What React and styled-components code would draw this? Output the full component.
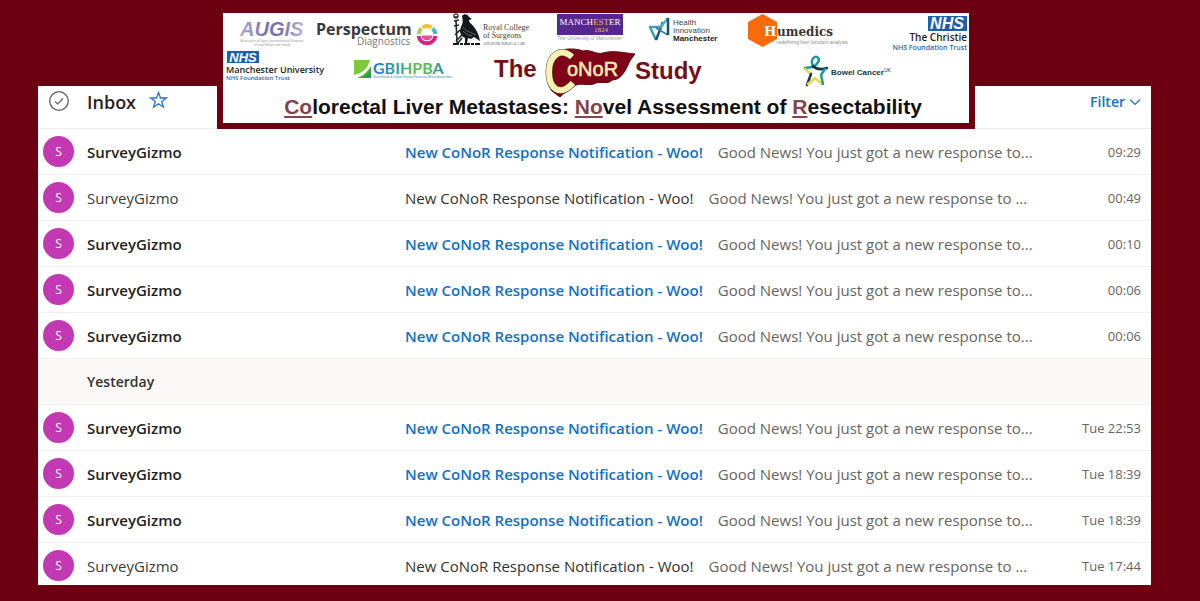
import React from 'react';
import styled, { createGlobalStyle } from 'styled-components';

const GlobalStyle = createGlobalStyle`
  * {
    box-sizing: border-box;
  }

  body {
    margin: 0;
    background: #6c0010;
    font-family: "Open Sans", "Noto Sans", sans-serif;
  }

  h1, h2, ul {
    margin: 0;
    padding: 0;
  }
`;

const Page = styled.main`
  position: relative;
  display: flex;
  height: 100vh;
  padding: 86px 49px 16px 38px;
`;

const Mailbox = styled.section`
  flex: 1;
  min-width: 0;
  overflow: hidden;
  background: #fff;
`;

const MailHeader = styled.header`
  display: flex;
  align-items: flex-start;
  height: 43px;
  padding: 0 10px 0 5px;
  border-bottom: 1px solid #edebe9;
`;

const SelectAll = styled.label`
  display: flex;
  justify-content: center;
  width: 31px;
  margin-right: 13px;
  padding-top: 5px;
`;

const HiddenCheckbox = styled.input`
  position: absolute;
  width: 20px;
  height: 20px;
  margin: 0;
  opacity: 0;
`;

const FolderName = styled.h1`
  color: #252423;
  font-size: 18px;
  font-weight: 600;
  line-height: 32px;
`;

const IconButton = styled.button`
  display: flex;
  margin-left: 13px;
  padding: 5px 0 0;
  border: 0;
  background: none;
  color: #2b74cf;
`;

const FilterButton = styled.button`
  display: flex;
  align-items: center;
  gap: 4px;
  margin-left: auto;
  padding: 0;
  border: 0;
  background: none;
  color: #1070cc;
  font-family: inherit;
  font-size: 14px;
  font-weight: 600;
  line-height: 32px;
`;

const List = styled.ul`
  list-style: none;
`;

const Row = styled.li`
  display: grid;
  grid-template-columns: 44px 318px minmax(0, 1fr) auto;
  align-items: center;
  height: 46px;
  padding: 0 10px 0 5px;
  border-bottom: 1px solid #f1f0ef;
  font-size: 15px;
`;

const Divider = styled(Row)`
  background: #faf9f8;
`;

const DividerTitle = styled.h2`
  grid-column: 2;
  color: #323130;
  font-size: 14px;
  font-weight: 600;
`;

const Avatar = styled.span`
  display: flex;
  align-items: center;
  justify-content: center;
  width: 31px;
  height: 31px;
  border-radius: 50%;
  background: #c239b3;
  color: #fff;
  font-size: 12px;
`;

const Sender = styled.span`
  color: ${props => (props.$unread ? '#201f1e' : '#3b3a39')};
  font-weight: ${props => (props.$unread ? 600 : 400)};
`;

const Message = styled.div`
  display: flex;
  gap: 15px;
  white-space: nowrap;
`;

const Subject = styled.a`
  color: ${props => (props.$unread ? '#1070cc' : '#323130')};
  font-weight: ${props => (props.$unread ? 600 : 400)};
  text-decoration: none;
`;

const Preview = styled.span`
  color: #666462;
`;

const Time = styled.time`
  color: #666462;
  font-size: 13px;
`;

/* The study banner lies over the top edge of the mailbox */
const Banner = styled.aside`
  position: absolute;
  top: 7px;
  left: 217px;
  right: 225px;
  padding-bottom: 4px;
  border: 6px solid #6c0010;
  background: #fff;
`;

const LogoRow = styled.div`
  display: flex;
  height: ${props => props.$height}px;
  padding-left: ${props => props.$indent}px;
`;

const LogoSvg = styled.svg`
  flex: none;
  overflow: visible;
  font-family: "Liberation Sans", Arial, sans-serif;
`;

const StudyTitle = styled.h2`
  padding-left: 14px;
  color: #111;
  font-family: "Liberation Sans", Arial, sans-serif;
  font-size: 21px;
  font-weight: 700;
  line-height: 24px;
  text-align: center;
  white-space: nowrap;
`;

const Initial = styled.span`
  color: #84444a;
  text-decoration: underline 2px;
  text-underline-offset: 2px;
`;

const Logo = ({ width, height = 36, label, children }) => (
  <LogoSvg width={width} height={height} viewBox={`0 0 ${width} ${height}`} role="img" aria-label={label}>
    {children}
  </LogoSvg>
);

const AugisLogo = () => (
  <Logo width={78} label="AUGIS">
    <defs>
      <linearGradient id="augis">
        <stop offset="0" stopColor="#b3aed6" />
        <stop offset="0.4" stopColor="#7a72b0" />
        <stop offset="0.65" stopColor="#7a72b0" />
        <stop offset="1" stopColor="#bcb8d8" />
      </linearGradient>
    </defs>
    <text x="2" y="23" fontSize="20" fontWeight="700" fontStyle="italic" fill="url(#augis)">AUGIS</text>
    <text x="34" y="29" fontSize="3" textAnchor="middle" fill="#999">Association of Upper Gastrointestinal Surgeons</text>
    <text x="34" y="33" fontSize="3" textAnchor="middle" fill="#999">of Great Britain and Ireland</text>
  </Logo>
);

const PerspectumLogo = () => (
  <Logo width={136} label="Perspectum Diagnostics">
    <g fontFamily="Open Sans, sans-serif">
      <text x="0" y="22" fontSize="16" fontWeight="700" fill="#3a3a3c">Perspectum</text>
      <text x="41" y="32" fontSize="10" fill="#77787b">Diagnostics</text>
    </g>
    <g fill="none" strokeWidth="4">
      <path d="M106.5 14.5A8.5 8.5 0 0 1 115.5 14.5" stroke="#f2c230" />
      <path d="M105.5 15.5A8.5 8.5 0 0 0 102.5 21" stroke="#a4cf5c" />
      <path d="M116.5 15.5A8.5 8.5 0 0 1 119.5 21" stroke="#45b8d8" />
      <path d="M102.6 23A8.5 8.5 0 0 0 119.4 23" stroke="#d6247c" />
    </g>
    <path d="M105.5 22.5H116.5A5.5 5 0 0 1 105.5 22.5Z" fill="#e0529a" />
  </Logo>
);

const SurgeonsLogo = () => (
  <Logo width={104} label="Royal College of Surgeons">
    <path d="M10 3C12 0 16 1 17 4L20 6L17 7C17 10 20 11 22 14C25 18 27 22 28 28L22 24L19 26L16 25L15 30H13L13 25C8 23 7 18 9 14C11 10 11 8 10 3Z" fill="#15191c" />
    <path d="M4 7L5 30M2 4L6 4M2 8L7 7M2 13L7 12M3 22L8 17M4 28L12 20M6 30L10 25" fill="none" stroke="#22282c" strokeWidth="1.6" />
    <circle cx="4" cy="3" r="2.2" fill="none" stroke="#22282c" strokeWidth="1.2" />
    <path d="M11 14C13 18 18 19 24 22M11 18C14 21 17 22 20 23" fill="none" stroke="#7e868a" strokeWidth="0.7" />
    <path d="M1 31H28" stroke="#15191c" strokeWidth="2" strokeDasharray="6 1 3 1" />
    <g fontFamily="Liberation Serif, serif" fill="#444">
      <text x="31" y="17" fontSize="8">Royal College</text>
      <text x="31" y="25" fontSize="8">of Surgeons</text>
      <text x="31" y="32" fontSize="3">ADVANCING SURGICAL CARE</text>
    </g>
  </Logo>
);

const UniversityLogo = () => (
  <Logo width={91} label="The University of Manchester">
    <rect x="1" y="1" width="66" height="21" fill="#56278f" />
    <g fontFamily="Liberation Serif, serif" fill="#fff">
      <text x="34" y="12" fontSize="9" textAnchor="middle">
        MANCH<tspan fill="#f0c04a">EST</tspan>ER
      </text>
      <text x="45" y="19" fontSize="7" textAnchor="middle" fill="#f0c04a">1824</text>
    </g>
    <text x="1" y="27" fontSize="5" fontStyle="italic" fill="#9a98a0">The University of Manchester</text>
  </Logo>
);

const InnovationLogo = () => (
  <Logo width={101} label="Health Innovation Manchester">
    <g fill="none" strokeWidth="2.5" strokeLinejoin="round">
      <path d="M15 14H3L9 27" stroke="#3d9cba" />
      <path d="M9 27L16 9" stroke="#1a587a" />
      <path d="M9 15L21 22" stroke="#2f7fa6" strokeWidth="1.5" />
      <path d="M13 15L21 5" stroke="#4db3c8" />
      <path d="M21 5V22" stroke="#1c4f6e" />
    </g>
    <g fontSize="8" fill="#444">
      <text x="26" y="12">Health</text>
      <text x="26" y="20">Innovation</text>
      <text x="26" y="28" fontWeight="700" fill="#222">Manchester</text>
    </g>
  </Logo>
);

const HumedicsLogo = () => (
  <Logo width={144} label="Humedics">
    <path d="M14.5 2L28 9.5V25.5L14.5 33L1 25.5V9.5Z" fill="#fb6a0a" stroke="#fb6a0a" strokeWidth="2" strokeLinejoin="round" />
    <g fontFamily="DejaVu Serif, serif" fontWeight="700">
      <text x="16" y="23" fontSize="13" fill="#fff">H</text>
      <text x="29" y="23" fontSize="12" fill="#3a3536">umedics</text>
    </g>
    <text x="29" y="31" fontSize="5" fill="#8a8a8a">redefining liver function analysis</text>
  </Logo>
);

const ChristieLogo = () => (
  <Logo width={77} label="The Christie NHS Foundation Trust">
    <rect x="36" y="3" width="39" height="15" fill="#1b5fae" />
    <text x="55" y="16" fontSize="16" fontWeight="700" fontStyle="italic" textAnchor="middle" fill="#fff">NHS</text>
    <g fontFamily="Open Sans, sans-serif" fontWeight="600" textAnchor="end">
      <text x="75" y="28" fontSize="10" fill="#222">The Christie</text>
      <text x="75" y="37" fontSize="7" fill="#2a66ae">NHS Foundation Trust</text>
    </g>
  </Logo>
);

const ManchesterNhsLogo = () => (
  <Logo width={127} height={46} label="Manchester University NHS Foundation Trust">
    <rect x="1" y="2" width="32" height="12" fill="#1b5fae" />
    <text x="17" y="13" fontSize="13" fontWeight="700" fontStyle="italic" textAnchor="middle" fill="#fff">NHS</text>
    <g fontFamily="Open Sans, sans-serif" fontWeight="600">
      <text x="0" y="24" fontSize="9" fill="#222">Manchester University</text>
      <text x="0" y="31" fontSize="6" fill="#2a66ae">NHS Foundation Trust</text>
    </g>
  </Logo>
);

const GbihpbaLogo = () => (
  <Logo width={142} height={46} label="GBIHPBA">
    <defs>
      <linearGradient id="gbihpba">
        <stop offset="0" stopColor="#2679b8" />
        <stop offset="0.35" stopColor="#2ba0b0" />
        <stop offset="0.6" stopColor="#6cbf3c" />
        <stop offset="0.8" stopColor="#55b56a" />
        <stop offset="1" stopColor="#2083a8" />
      </linearGradient>
    </defs>
    <rect x="1" y="11" width="17" height="18" fill="#56b32f" />
    <path d="M1 11H18C17 18 12 24 1 27Z" fill="#7cc93c" />
    <path d="M1 26C10 24 15 19 17 11H18V17C15 22 10 27 4 29H1Z" fill="#fff" />
    <path d="M8 29C13 27 16 23 18 20V29Z" fill="#2c9a55" />
    <g fontFamily="Lato, sans-serif">
      <text x="20" y="25" fontSize="16" fontWeight="700" fill="url(#gbihpba)">GBIHPBA</text>
      <text x="20" y="29" fontSize="3" fill="#2a8fb0">Great Britain & Ireland Hepato Pancreato Biliary Association</text>
    </g>
  </Logo>
);

const ConorLogo = () => (
  <Logo width={308} height={46} label="The CoNoR Study">
    <g fontSize="24" fontWeight="700" fill="#741018">
      <text x="-1" y="28">The</text>
      <text x="140" y="30">Study</text>
    </g>
    <path
      d="M60 4C68 -1 80 -1 88 2C96 0 101 6 108 4C118 1 130 4 140 5C137 9 135 11 133 16C129 25 124 31 117 31C113 36 106 32 101 34C94 38 84 32 78 38C74 42 68 44 65 48L57 42C51 35 50 14 60 4Z"
      fill="#7f0418"
      stroke="#5c0010"
    />
    <g fill="none">
      <path d="M77 8C66 -2 54 6 54 23C54 40 65 48 78 34" stroke="#44521f" strokeWidth="7" />
      <path d="M77 8C66 -2 54 6 54 23C54 40 65 48 78 34" stroke="#fbf0b4" strokeWidth="6" />
    </g>
    <text x="72" y="27" fontSize="20" fill="#fbf0b4" stroke="#fbf0b4" strokeWidth="0.5">oNoR</text>
  </Logo>
);

const BowelCancerLogo = () => (
  <Logo width={90} height={46} label="Bowel Cancer UK">
    <g fill="none" strokeWidth="2.5" strokeLinecap="round" strokeLinejoin="round">
      <path d="M10 17C7 11 11 7 14 8C18 10 15 15 10 18L2 19" stroke="#1f9aa0" />
      <path d="M10 17C14 21 18 21 24 19" stroke="#153848" />
      <path d="M2 20L8 25" stroke="#e3d84a" />
      <path d="M8 25L4 36" stroke="#153848" />
      <path d="M5 35L12 29L19 35" stroke="#e3d84a" />
      <path d="M20 35L18 26L22 20" stroke="#1f9aa0" />
    </g>
    <text x="28" y="26" fontSize="8" fontWeight="700" fill="#16394a">Bowel Cancer</text>
    <text x="81" y="23" fontSize="5" fill="#16394a">UK</text>
  </Logo>
);

const today = [
  { time: '09:29', unread: true },
  { time: '00:49', unread: false },
  { time: '00:10', unread: true },
  { time: '00:06', unread: true },
  { time: '00:06', unread: true },
];

const yesterday = [
  { time: 'Tue 22:53', unread: true },
  { time: 'Tue 18:39', unread: true },
  { time: 'Tue 18:39', unread: true },
  { time: 'Tue 17:44', unread: false },
];

const Mail = ({ time, unread }) => (
  <Row>
    <Avatar>S</Avatar>
    <Sender $unread={unread}>SurveyGizmo</Sender>
    <Message>
      <Subject href="#" $unread={unread}>New CoNoR Response Notification - Woo!</Subject>
      <Preview>Good News! You just got a new response to{unread ? '...' : ' ...'}</Preview>
    </Message>
    <Time>{time}</Time>
  </Row>
);

export default () => (
  <Page>
    <GlobalStyle />
    <Mailbox>
      <MailHeader>
        <SelectAll>
          <HiddenCheckbox type="checkbox" aria-label="Select all messages" />
          <svg width="20" height="20" viewBox="0 0 20 20" fill="none" stroke="#605e5c">
            <circle cx="10" cy="10" r="9.3" strokeWidth="1.3" />
            <path d="M6 10.5L8.7 13L14 7.5" strokeWidth="1.2" />
          </svg>
        </SelectAll>
        <FolderName>Inbox</FolderName>
        <IconButton type="button" aria-label="Add to favourites">
          <svg width="19" height="18" viewBox="0 0 19 18" fill="none" stroke="currentColor" strokeWidth="1.3">
            <path d="M9.5 1.5L11.5 7H17.3L12.7 10.5L14.4 16.2L9.5 12.7L4.6 16.2L6.3 10.5L1.7 7H7.5Z" />
          </svg>
        </IconButton>
        <FilterButton type="button">
          Filter
          <svg width="12" height="8" viewBox="0 0 12 8" fill="none" stroke="currentColor" strokeWidth="1.2">
            <path d="M1 1.5L6 6.5L11 1.5" />
          </svg>
        </FilterButton>
      </MailHeader>
      <List>
        {today.map((mail, i) => <Mail key={i} {...mail} />)}
        <Divider>
          <DividerTitle>Yesterday</DividerTitle>
        </Divider>
        {yesterday.map((mail, i) => <Mail key={i} {...mail} />)}
      </List>
    </Mailbox>
    <Banner>
      <LogoRow $height={36} $indent={15}>
        <AugisLogo />
        <PerspectumLogo />
        <SurgeonsLogo />
        <UniversityLogo />
        <InnovationLogo />
        <HumedicsLogo />
        <ChristieLogo />
      </LogoRow>
      <LogoRow $height={46} $indent={3}>
        <ManchesterNhsLogo />
        <GbihpbaLogo />
        <ConorLogo />
        <BowelCancerLogo />
      </LogoRow>
      <StudyTitle>
        <Initial>Co</Initial>lorectal Liver Metastases: <Initial>No</Initial>vel Assessment of <Initial>R</Initial>esectability
      </StudyTitle>
    </Banner>
  </Page>
);
